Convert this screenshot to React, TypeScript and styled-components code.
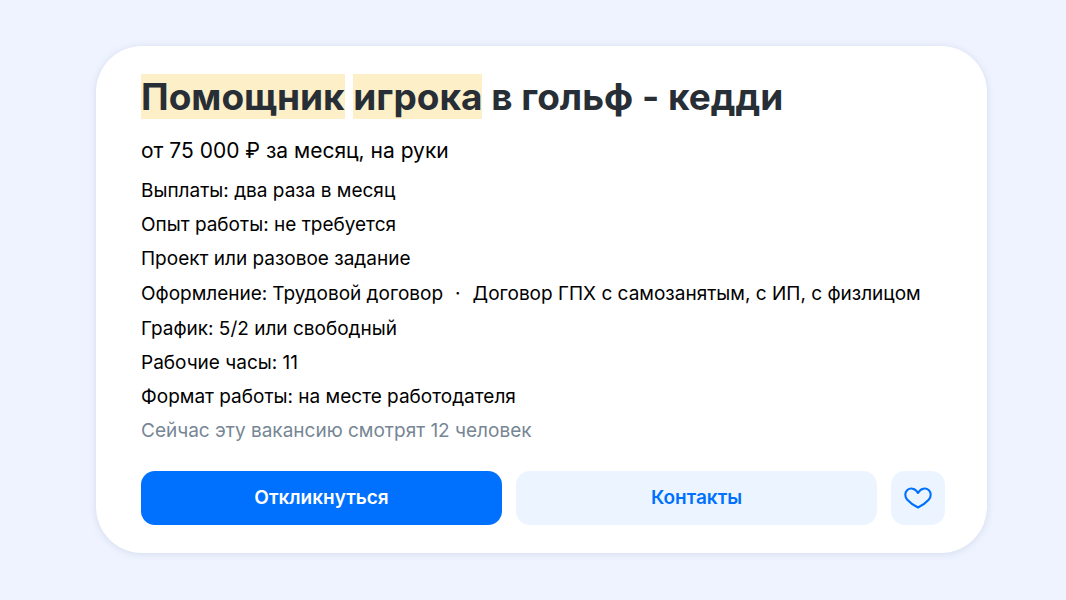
import React from "react";
import styled, { createGlobalStyle } from "styled-components";

const GlobalStyle = createGlobalStyle`
  *, *::before, *::after { box-sizing: border-box; }
  body {
    margin: 0;
    background: #eff3ff;
    color: #000;
    font-family: Inter, "Liberation Sans", sans-serif;
  }
`;

const Page = styled.main`
  min-height: 100vh;
  padding: 46px 79px 47px 96px;
`;

const Card = styled.article`
  padding: 29px 42px 28px 45px;
  border-radius: 46px;
  background: #fff;
  box-shadow: 0 1px 7px rgba(112, 136, 170, 0.22);
`;

const Title = styled.h1`
  margin: 0;
  color: #272e35;
  font-size: 37px;
  font-weight: 700;
  line-height: 44px;
`;

const Highlight = styled.mark`
  color: inherit;
  background: #fdefc8;
`;

const Salary = styled.p`
  margin: 17px 0 12px;
  font-size: 21px;
  line-height: 30px;
`;

const Details = styled.div`
  display: flex;
  flex-direction: column;
  gap: 8px;
`;

const Detail = styled.p<{ $muted?: boolean }>`
  margin: 0;
  color: ${({ $muted }) => ($muted ? "#768694" : "inherit")};
  font-size: 19px;
  line-height: 26px;
`;

const Contracts = styled.div`
  display: flex;
  flex-wrap: wrap;
  gap: 5px;
  font-size: 19px;
  line-height: 28px;
`;

const ContractList = styled.ul`
  display: flex;
  flex-wrap: wrap;
  margin: 0;
  padding: 0;
  list-style: none;
`;

const Contract = styled.li`
  & + &::before {
    content: "·";
    padding: 0 12px;
  }
`;

const Actions = styled.div`
  display: flex;
  gap: 14px;
  margin-top: 27px;
`;

const Button = styled.button<{ $primary?: boolean; $square?: boolean }>`
  display: flex;
  align-items: center;
  justify-content: center;
  flex: ${({ $square }) => ($square ? "0 0 54px" : "1 1 0")};
  height: 54px;
  padding: 0;
  border: 0;
  border-radius: 14px;
  background: ${({ $primary }) => ($primary ? "#0070ff" : "#ecf5ff")};
  color: ${({ $primary }) => ($primary ? "#fff" : "#0070ff")};
  font-family: inherit;
  font-size: 19px;
  font-weight: 600;
  line-height: 26px;
  cursor: pointer;
`;

const Heart = () => (
  <svg width="30" height="24" viewBox="0 0 30 24" fill="none" aria-hidden="true">
    <path
      d="M15 21.5C11.5 19.8 7.300 17 4.300 13.700C1.600 10.700 1.700 6.700 4.100 4.300C7.300 1.300 12.200 2.200 15 7C17.800 2.200 22.700 1.300 25.900 4.300C28.300 6.700 28.400 10.700 25.700 13.700C22.700 17 18.500 19.800 15 21.500Z"
      stroke="currentColor"
      strokeWidth="2.1"
      strokeLinejoin="round"
    />
  </svg>
);

export default function App() {
  return (
    <>
      <GlobalStyle />
      <Page>
        <Card>
          <Title>
            <Highlight>Помощник</Highlight> <Highlight>игрока</Highlight> в гольф - кедди
          </Title>
          <Salary>от 75 000 ₽ за месяц, на руки</Salary>
          <Details>
            <Detail>Выплаты: два раза в месяц</Detail>
            <Detail>Опыт работы: не требуется</Detail>
            <Detail>Проект или разовое задание</Detail>
            <Contracts>
              <span>Оформление:</span>
              <ContractList>
                <Contract>Трудовой договор</Contract>
                <Contract>Договор ГПХ с самозанятым, с ИП, с физлицом</Contract>
              </ContractList>
            </Contracts>
            <Detail>График: 5/2 или свободный</Detail>
            <Detail>Рабочие часы: 11</Detail>
            <Detail>Формат работы: на месте работодателя</Detail>
            <Detail $muted>Сейчас эту вакансию смотрят 12 человек</Detail>
          </Details>
          <Actions>
            <Button type="button" $primary>Откликнуться</Button>
            <Button type="button">Контакты</Button>
            <Button type="button" $square aria-label="Добавить в избранное">
              <Heart />
            </Button>
          </Actions>
        </Card>
      </Page>
    </>
  );
}
